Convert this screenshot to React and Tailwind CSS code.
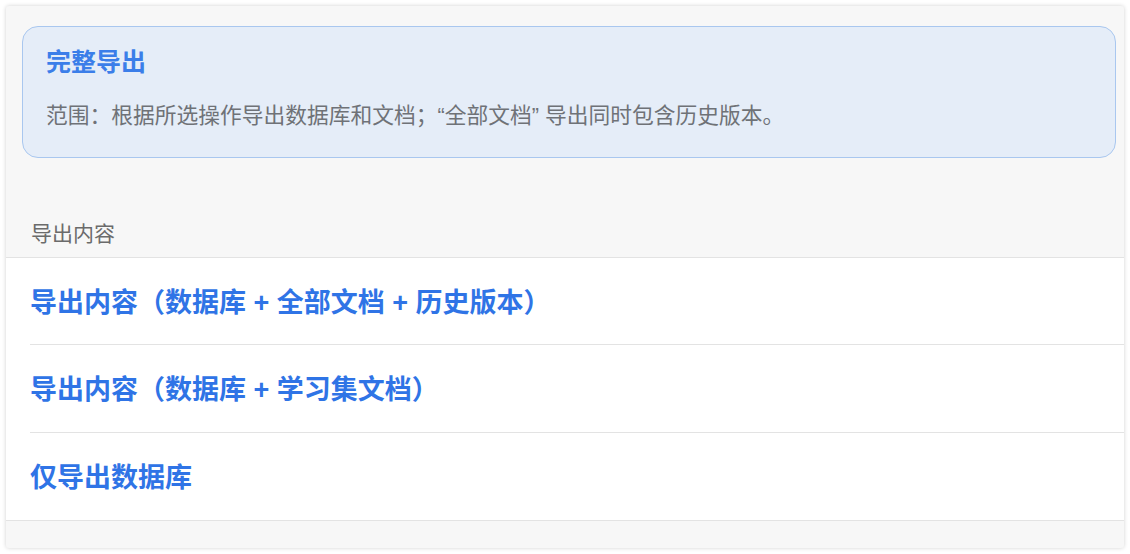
export default function App() {
  const items = [
    { label: "导出内容（数据库 + 全部文档 + 历史版本）", h: "h-[87px]" },
    { label: "导出内容（数据库 + 学习集文档）", h: "h-[88px]" },
    { label: "仅导出数据库", h: "h-[87px]" },
  ];

  return (
    <div
      className="w-full h-[554px] bg-white p-[6px]"
      style={{
        fontFamily: '"Liberation Sans", "Noto Sans CJK SC", sans-serif',
      }}
    >
      <div className="h-full bg-[#f7f7f7] rounded-[3px] shadow-[0_0_4px_rgba(0,0,0,0.18)] flex flex-col">
        {/* 说明卡片 */}
        <div className="ml-[16px] mr-[8px] mt-[20px] h-[132px] rounded-[16px] border border-[#a9c7ef] bg-[#e5edf8] px-[23px] pt-[17px]">
          <h1 className="text-[25px] leading-[36px] font-bold text-[#3b7ee9]">
            完整导出
          </h1>
          <p className="mt-[21px] text-[21.75px] leading-[30px] text-[#6f7277]">
            范围：根据所选操作导出数据库和文档；“全部文档” 导出同时包含历史版本。
          </p>
        </div>

        <h2 className="mt-[62px] pl-[25px] text-[21px] leading-[28px] text-[#6b6b6b]">
          导出内容
        </h2>

        {/* 选项列表 */}
        <div className="mt-[9px] bg-white border-t border-b border-[#e3e3e3]">
          {items.map((item, i) => (
            <div
              key={item.label}
              className={`ml-[24px] pt-[3px] flex items-center ${item.h} ${
                i < items.length - 1 ? "border-b border-[#e3e3e3]" : ""
              }`}
            >
              <span className="text-[27px] leading-[36px] font-bold text-[#2f74e6]">
                {item.label}
              </span>
            </div>
          ))}
        </div>
      </div>
    </div>
  );
}
